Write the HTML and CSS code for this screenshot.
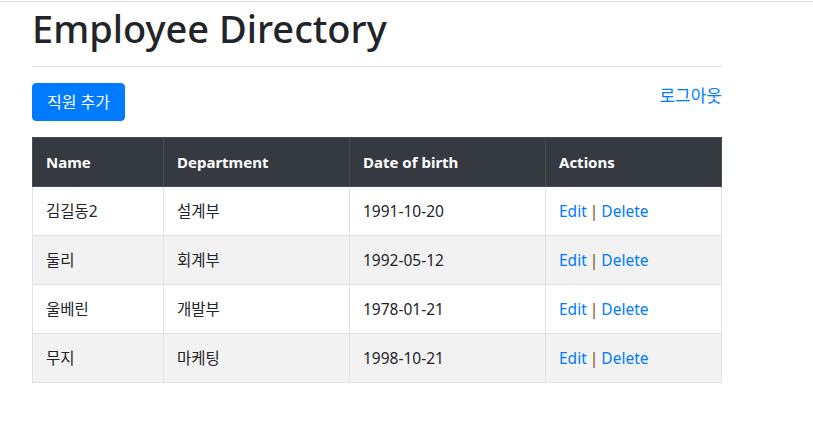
FILE: index.html
```html
<!DOCTYPE html>
<html lang="ko">

<head>
  <meta charset="utf-8">
  <title>Employee Directory</title>
  <link rel="stylesheet" href="styles.css">
</head>

<body>
  <div class="topline"></div>
  <div class="container">
    <h1>Employee Directory</h1>
    <hr>

    <div class="toolbar">
      <a class="btn" href="#">직원 추가</a>
      <a class="logout" href="#">로그아웃</a>
    </div>

    <table class="table">
      <thead>
        <tr>
          <th class="col-name">Name</th>
          <th class="col-dept">Department</th>
          <th class="col-dob">Date of birth</th>
          <th>Actions</th>
        </tr>
      </thead>
      <tbody>
        <tr>
          <td>김길동2</td>
          <td>설계부</td>
          <td>1991-10-20</td>
          <td><a href="#">Edit</a> <span class="sep">|</span> <a href="#">Delete</a></td>
        </tr>
        <tr>
          <td>둘리</td>
          <td>회계부</td>
          <td>1992-05-12</td>
          <td><a href="#">Edit</a> <span class="sep">|</span> <a href="#">Delete</a></td>
        </tr>
        <tr>
          <td>울베린</td>
          <td>개발부</td>
          <td>1978-01-21</td>
          <td><a href="#">Edit</a> <span class="sep">|</span> <a href="#">Delete</a></td>
        </tr>
        <tr>
          <td>무지</td>
          <td>마케팅</td>
          <td>1998-10-21</td>
          <td><a href="#">Edit</a> <span class="sep">|</span> <a href="#">Delete</a></td>
        </tr>
      </tbody>
    </table>
  </div>
</body>

</html>
```

FILE: styles.css
```css
* {
  box-sizing: border-box;
}

body {
  margin: 0;
  font-family: "Noto Sans", "Noto Sans CJK KR", sans-serif;
  font-size: 16px;
  line-height: 1.5;
  color: #212529;
  background: #fff;
}

a {
  color: #007bff;
  text-decoration: none;
}

.topline {
  height: 2px;
  border-top: 1px solid #fff;
  background: #dcdcdc;
}

.container {
  width: 690px;
  margin-left: 32px;
}

h1 {
  margin: 2px 0 0;
  font-size: 38px;
  font-weight: 500;
  line-height: 48px;
}

hr {
  margin: 14px 0 16px;
  border: 0;
  border-top: 1px solid #e3e3e3;
}

.toolbar {
  display: flex;
  justify-content: space-between;
  align-items: flex-start;
  margin-bottom: 16px;
}

.btn {
  display: inline-block;
  padding: 6px 14px;
  line-height: 24px;
  color: #fff;
  background: #007bff;
  border: 1px solid #007bff;
  border-radius: 4px;
}

.logout {
  font-size: 17px;
}

.table {
  width: 690px;
  border-collapse: collapse;
  table-layout: fixed;
}

.table th,
.table td {
  padding: 12px 13px;
  text-align: left;
  border: 1px solid #dee2e6;
  height: 49px;
}

.table th {
  color: #fff;
  background: #343a40;
  border-color: #454d55;
  font-weight: 700;
  font-size: 15px;
}

.col-name { width: 131px; }
.col-dept { width: 186px; }
.col-dob { width: 196px; }

.table tbody tr:nth-child(even) {
  background: #f2f2f2;
}

.table td {
  padding: 13px 13px 11px;
  font-size: 15.5px;
}

.sep {
  color: #7a4a1e;
  margin: 0 -1px;
}
```
